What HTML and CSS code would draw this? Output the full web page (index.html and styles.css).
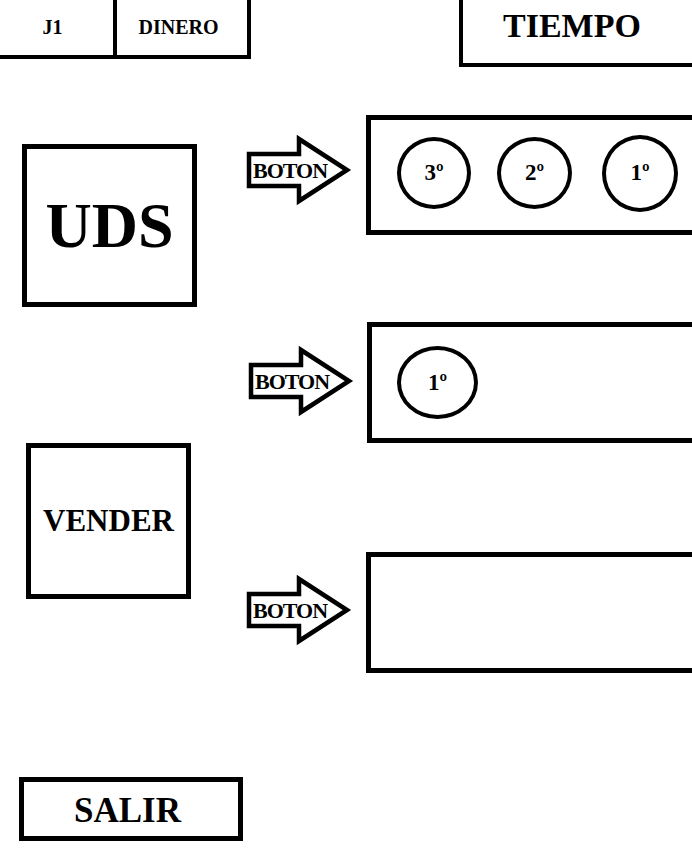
FILE: index.html
```html
<!DOCTYPE html>
<html lang="es">
<head>
<meta charset="utf-8">
<title>Juego</title>
<link rel="stylesheet" href="styles.css">
</head>
<body>
<div class="canvas">
  <header class="top">
    <div class="stats">
      <div class="cell cell-player">J1</div>
      <div class="cell cell-money">DINERO</div>
    </div>
    <div class="time">TIEMPO</div>
  </header>

  <main class="main">
    <div class="side">
      <div class="box box-uds">UDS</div>
      <div class="box box-sell">VENDER</div>
      <div class="box box-exit">SALIR</div>
    </div>

    <div class="lanes">
      <div class="lane lane-1">
        <svg class="arrow" width="108" height="72" viewBox="0 0 108 72">
          <polygon points="4,19 54,19 54,4 102,35 54,66 54,51 4,51" class="arrow-shape"/>
          <text x="8" y="43" class="arrow-label">BOTON</text>
        </svg>
        <div class="panel panel-1">
          <div class="slot slot-a">3º</div>
          <div class="slot slot-b">2º</div>
          <div class="slot slot-c">1º</div>
        </div>
      </div>

      <div class="lane lane-2">
        <svg class="arrow" width="108" height="72" viewBox="0 0 108 72">
          <polygon points="4,19 54,19 54,4 102,35 54,66 54,51 4,51" class="arrow-shape"/>
          <text x="8" y="43" class="arrow-label">BOTON</text>
        </svg>
        <div class="panel panel-2">
          <div class="slot slot-d">1º</div>
        </div>
      </div>

      <div class="lane lane-3">
        <svg class="arrow" width="108" height="72" viewBox="0 0 108 72">
          <polygon points="4,19 54,19 54,4 102,35 54,66 54,51 4,51" class="arrow-shape"/>
          <text x="8" y="43" class="arrow-label">BOTON</text>
        </svg>
        <div class="panel panel-3"></div>
      </div>
    </div>
  </main>
</div>
</body>
</html>
```

FILE: styles.css
```css
html, body {
  margin: 0;
  padding: 0;
  background: #ffffff;
  overflow: hidden;
}

.canvas {
  width: 692px;
  height: 855px;
  overflow: hidden;
  font-family: "Liberation Serif", "Times New Roman", serif;
  font-weight: bold;
  color: #000000;
}

/* ---------- top bar ---------- */
.top {
  display: flex;
  align-items: flex-end;
  height: 67px;
}

.stats {
  flex-shrink: 0;
  display: flex;
  box-sizing: border-box;
  width: 263px;
  height: 63px;
  margin-left: -12px;
  margin-bottom: 8px;
  border: 4px solid #000;
}

.cell {
  display: flex;
  align-items: center;
  justify-content: center;
  font-size: 20px;
}

.cell-player {
  width: 121px;
}

.cell-money {
  box-sizing: border-box;
  width: 134px;
  border-left: 4px solid #000;
  padding-right: 7px;
}

.time {
  flex-shrink: 0;
  display: flex;
  align-items: center;
  box-sizing: border-box;
  width: 245px;
  height: 71px;
  margin-left: 208px;
  padding-left: 40px;
  padding-bottom: 12px;
  border: 4px solid #000;
  font-size: 34px;
}

/* ---------- main ---------- */
.main {
  display: flex;
}

.side {
  flex-shrink: 0;
  width: 245px;
  display: flex;
  flex-direction: column;
  align-items: flex-start;
}

.box {
  box-sizing: border-box;
  display: flex;
  align-items: center;
  justify-content: center;
  border: 5px solid #000;
}

.box-uds {
  width: 175px;
  height: 163px;
  margin-top: 77px;
  margin-left: 22px;
  font-size: 64px;
}

.box-sell {
  width: 165px;
  height: 156px;
  margin-top: 136px;
  margin-left: 26px;
  font-size: 31px;
}

.box-exit {
  width: 224px;
  height: 64px;
  margin-top: 178px;
  margin-left: 19px;
  padding-top: 3px;
  padding-right: 7px;
  font-size: 35px;
}

/* ---------- lanes ---------- */
.lanes {
  display: flex;
  flex-direction: column;
}

.lane {
  display: flex;
  align-items: flex-start;
}

.lane-1 { margin-top: 48px; }
.lane-2 { margin-top: 87px; }
.lane-3 { margin-top: 109px; }

.arrow {
  flex-shrink: 0;
  display: block;
  overflow: visible;
}

.lane-1 .arrow { margin-top: 20px; }
.lane-2 .arrow { margin-top: 24px; margin-left: 2px; }
.lane-3 .arrow { margin-top: 23px; }

.arrow-shape {
  fill: #ffffff;
  stroke: #000000;
  stroke-width: 4.5;
  stroke-linejoin: miter;
  stroke-miterlimit: 10;
}

.arrow-label {
  font-family: "Liberation Serif", "Times New Roman", serif;
  font-weight: bold;
  font-size: 22px;
  letter-spacing: -1px;
  fill: #000000;
}

.panel {
  flex-shrink: 0;
  box-sizing: border-box;
  width: 340px;
  border: 5px solid #000;
  display: flex;
  align-items: center;
}

.lane-1 .panel { margin-left: 13px; }
.lane-2 .panel { margin-left: 12px; }
.lane-3 .panel { margin-left: 13px; }

.panel-1 {
  height: 120px;
  padding-left: 26px;
  padding-bottom: 4px;
}

.panel-2 {
  height: 121px;
  padding-left: 25px;
}

.panel-3 {
  height: 121px;
}

.slot {
  flex-shrink: 0;
  box-sizing: border-box;
  display: flex;
  align-items: center;
  justify-content: center;
  border: 4px solid #000;
  border-radius: 50%;
  font-size: 23px;
}

.slot-a { width: 74px; height: 72px; }
.slot-b { width: 75px; height: 72px; margin-left: 26px; }
.slot-c { width: 76px; height: 77px; margin-left: 30px; }
.slot-d { width: 81px; height: 73px; }
```
